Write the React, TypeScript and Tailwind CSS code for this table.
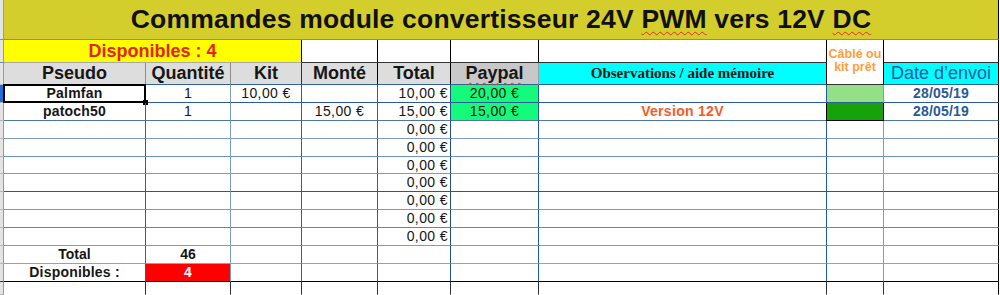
import type { ReactNode } from 'react'

type Row = {
  pseudo: string
  qte: string
  kit: string
  monte: string
  total: string
  paypal: string
  obs: string
  cable: '' | 'light' | 'dark'
  date: string
}

const empty: Row = { pseudo: '', qte: '', kit: '', monte: '', total: '0,00 €', paypal: '', obs: '', cable: '', date: '' }

const rows: Row[] = [
  { pseudo: 'Palmfan', qte: '1', kit: '10,00 €', monte: '', total: '10,00 €', paypal: '20,00 €', obs: '', cable: 'light', date: '28/05/19' },
  { pseudo: 'patoch50', qte: '1', kit: '', monte: '15,00 €', total: '15,00 €', paypal: '15,00 €', obs: 'Version 12V', cable: 'dark', date: '28/05/19' },
  empty, empty, empty, empty, empty, empty, empty,
]

// bottom line of each body row (the sheet's borders are not all the same shade)
const lines = [
  'border-b-[#2a5c9a]',
  'border-b-[#4f76a8]',
  'border-b-[#7c9cc4]',
  'border-b-[#6f93c0]',
  'border-b-[#7c9cc4]',
  'border-b-[#2b5791]',
  'border-b-[#7c9cc4]',
  'border-b-[#5f86b8]',
  'border-b-[#7c9cc4]',
]

const wavy = 'underline decoration-wavy decoration-[#e02b2b] decoration-1 underline-offset-[3px]'

function C({ className = '', children }: { className?: string; children?: ReactNode }) {
  return (
    <div className={`flex items-center justify-center border-r border-b leading-[17px] ${className}`}>
      {children}
    </div>
  )
}

function Strip({ active = false, line = 'border-b-[#b8b8b8]' }: { active?: boolean; line?: string }) {
  return (
    <div
      className={`border-r border-b border-r-[#9a9a9a] ${line} ${active ? 'bg-[#1a6fd8]' : 'bg-[#e4e4e4]'}`}
    />
  )
}

export default function App() {
  return (
    <div className="w-[1000px] h-[295px] overflow-hidden bg-white text-[#161616] font-['Liberation_Sans',Arial,sans-serif]">
      <div className="grid grid-cols-[4px_142px_85px_71px_76px_73px_88px_288px_57px_115px] grid-rows-[40px_23px_22px_18px_18px_18px_18px_17px_18px_18px_18px_18px_18px_18px_13px]">
        {/* Title */}
        <Strip line="border-b-[#8a8a8a]" />
        <C className="col-span-9 bg-[#d4ce2c] border-r-black border-b-[#8a8a8a] text-[26.5px] tracking-[0.2px] font-bold text-[#111]">
          <span>
            Commandes module convertisseur 24V <span className={wavy}>PWM</span> vers 12V{' '}
            <span className={wavy}>DC</span>
          </span>
        </C>

        {/* Disponibles / Câblé */}
        <Strip line="border-b-[#8a8a8a]" />
        <C className="col-span-3 bg-[#ffff00] border-r-black border-b-[#a8a8a8] text-[18px] font-bold text-[#e3241b]">
          Disponibles : 4
        </C>
        <C className="border-r-black border-b-[#333]" />
        <C className="border-r-black border-b-[#333]" />
        <C className="border-r-black border-b-[#333]" />
        <C className="border-r-black border-b-[#333]" />
        <div className="row-span-2 flex flex-col items-center justify-center border-r border-b border-r-black border-b-[#333] text-[12.5px] leading-[13px] font-bold text-[#ff9d3c] pb-[2px]">
          <span>Câblé ou</span>
          <span>kit prêt</span>
        </div>
        <C className="border-r-black border-b-[#333]" />

        {/* Headers */}
        <Strip />
        <C className="bg-[#dddddd] border-r-[#8c8c8c] border-b-[#2f62a0] text-[18px] font-bold">Pseudo</C>
        <C className="bg-[#dddddd] border-r-[#8c8c8c] border-b-[#2f62a0] text-[18px] font-bold">Quantité</C>
        <C className="bg-[#dddddd] border-r-[#333] border-b-[#2f62a0] text-[18px] font-bold">Kit</C>
        <C className="bg-[#dddddd] border-r-black border-b-[#2f62a0] text-[18px] font-bold">Monté</C>
        <C className="bg-[#dddddd] border-r-black border-b-[#2f62a0] text-[18px] font-bold">Total</C>
        <C className="bg-[#c8c8c8] border-r-[#9c9c9c] border-b-[#2f62a0] text-[18px] font-bold">
          <span className={wavy}>Paypal</span>
        </C>
        <C className="bg-[#00ffff] border-r-black border-b-[#2f62a0] text-[15px] font-bold font-['Liberation_Serif',serif]">
          Observations / aide mémoire
        </C>
        <C className="bg-[#00ffff] border-r-black border-b-[#2f62a0] text-[18px] text-[#1f5a9e]">Date d’envoi</C>

        {/* Orders */}
        {rows.map((r, i) => {
          const line = lines[i]
          return [
            <Strip key={`s${i}`} active={i === 0} />,
            <C key={`a${i}`} className={`relative border-r-[#2f62a0] ${line} text-[14px] font-bold tracking-[0.2px]`}>
              {r.pseudo}
              {i === 0 && (
                <>
                  <div className="absolute -left-px -top-px -right-px -bottom-px border-2 border-black" />
                  <div className="absolute -right-[3px] -bottom-[3px] w-[5px] h-[5px] bg-black" />
                </>
              )}
            </C>,
            <C key={`b${i}`} className={`border-r-[#7b9cc6] ${line} text-[14px]`}>{r.qte}</C>,
            <C key={`c${i}`} className={`border-r-[#2f62a0] ${line} text-[14px] tracking-[0.4px]`}>{r.kit}</C>,
            <C key={`d${i}`} className={`border-r-[#2f62a0] ${line} text-[14px] tracking-[0.4px]`}>{r.monte}</C>,
            <C key={`e${i}`} className={`justify-end pr-[2px] border-r-[#234f8a] ${line} text-[14px] tracking-[0.4px]`}>
              {r.total}
            </C>,
            <C
              key={`f${i}`}
              className={`border-r-[#1f5ba8] ${line} text-[14px] tracking-[0.4px] ${r.paypal ? 'bg-[#14fb7c]' : ''}`}
            >
              {r.paypal}
            </C>,
            <C key={`g${i}`} className={`border-r-[#1f5ba8] ${line} text-[14px] font-bold tracking-[0.3px] text-[#fb5a24]`}>
              {r.obs}
            </C>,
            <C
              key={`h${i}`}
              className={`${line} ${
                r.cable === 'light'
                  ? 'bg-[#93e086] border-r-[#7b9cc6]'
                  : r.cable === 'dark'
                    ? 'bg-[#16a30a] border-r-black border-b-black border-l border-l-black -ml-px'
                    : 'border-r-[#7b9cc6]'
              }`}
            />,
            <C key={`j${i}`} className={`border-r-black ${line} text-[14px] font-bold tracking-[0.2px] text-[#2a5a96]`}>
              {r.date}
            </C>,
          ]
        })}

        {/* Totals */}
        <Strip />
        <C className="border-r-[#2f62a0] border-b-[#86a5c9] text-[14px] font-bold">Total</C>
        <C className="border-r-[#7b9cc6] border-b-[#86a5c9] text-[14px] font-bold">46</C>
        <C className="border-r-[#2f62a0] border-b-[#86a5c9]" />
        <C className="border-r-[#2f62a0] border-b-[#86a5c9]" />
        <C className="border-r-[#234f8a] border-b-[#86a5c9]" />
        <C className="border-r-[#1f5ba8] border-b-[#86a5c9]" />
        <C className="border-r-[#1f5ba8] border-b-[#86a5c9]" />
        <C className="border-r-[#7b9cc6] border-b-[#86a5c9]" />
        <C className="border-r-black border-b-[#86a5c9]" />

        <Strip line="border-b-[#333]" />
        <C className="border-r-[#2f62a0] border-b-black text-[14px] font-bold tracking-[0.2px]">Disponibles :</C>
        <C className="bg-[#ff0000] border-r-[#7b9cc6] border-b-black text-[14px] font-bold text-white">4</C>
        <C className="border-r-[#2f62a0] border-b-black" />
        <C className="border-r-[#2f62a0] border-b-black" />
        <C className="border-r-[#234f8a] border-b-black" />
        <C className="border-r-[#1f5ba8] border-b-black" />
        <C className="border-r-[#1f5ba8] border-b-black" />
        <C className="border-r-[#7b9cc6] border-b-black" />
        <C className="border-r-black border-b-black" />

        {/* Trailing empty row */}
        <Strip />
        <C className="border-r-[#333] border-b-transparent" />
        <C className="border-r-[#333] border-b-transparent" />
        <C className="border-r-[#333] border-b-transparent" />
        <C className="border-r-[#333] border-b-transparent" />
        <C className="border-r-[#333] border-b-transparent" />
        <C className="border-r-[#333] border-b-transparent" />
        <C className="border-r-[#333] border-b-transparent" />
        <C className="border-r-[#333] border-b-transparent" />
        <C className="border-r-black border-b-transparent" />
      </div>
    </div>
  )
}
